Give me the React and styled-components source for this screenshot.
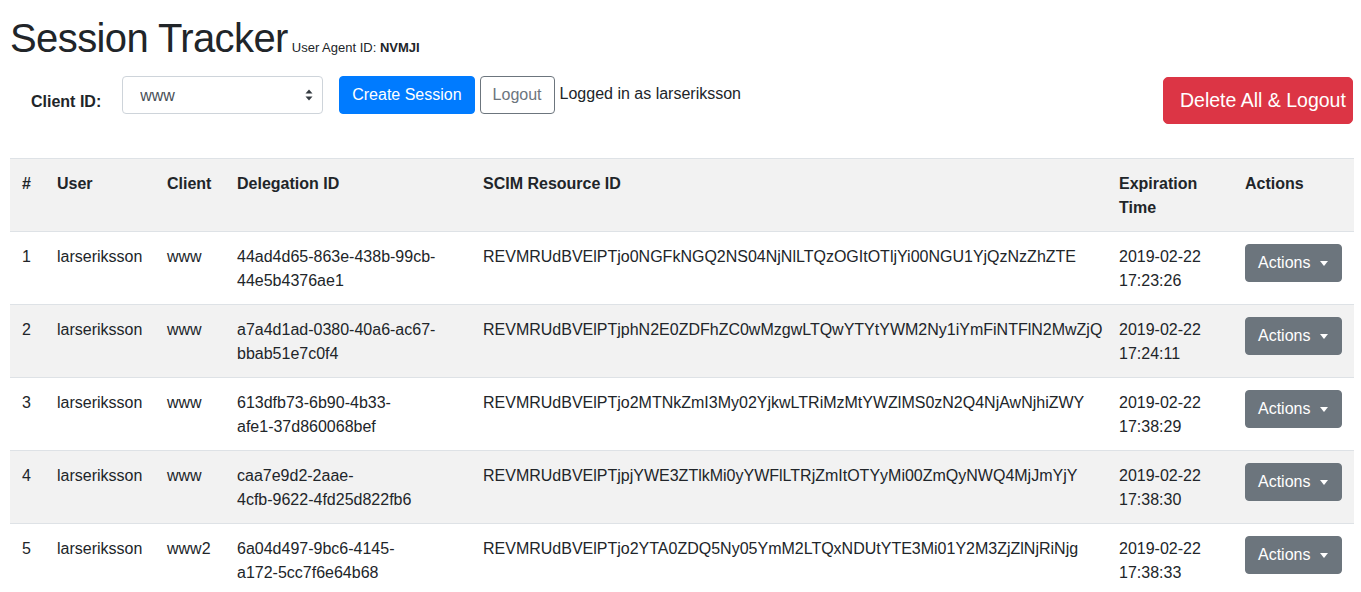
import React from 'react'
import styled, { createGlobalStyle } from 'styled-components'

const GlobalStyle = createGlobalStyle`
  body {
    margin: 0;
    background: #fff;
    color: #212529;
    font-family: "Liberation Sans", Arial, sans-serif;
    font-size: 16px;
    line-height: 1.5;
  }
`

const Page = styled.div`
  padding: 14px 7px 0 10px;
`

const TitleRow = styled.div`
  display: flex;
  align-items: baseline;
  gap: 4px;
`

const Title = styled.h1`
  margin: 0;
  font-size: 40px;
  font-weight: 500;
  line-height: 48px;
  letter-spacing: -0.6px;
`

const AgentId = styled.small`
  font-size: 13px;
  b {
    font-weight: 700;
  }
`

const Controls = styled.div`
  display: flex;
  align-items: flex-start;
  margin-top: 14px;
  height: 48px;
`

const FormGroup = styled.div`
  display: flex;
  align-items: center;
  height: 38px;
`

const Label = styled.label`
  font-weight: 700;
  padding: 13px 21px 0 21px;
`

const SelectWrap = styled.div`
  position: relative;
  width: 201px;
  height: 38px;
  margin-right: 16px;
`

const Select = styled.select`
  appearance: none;
  width: 100%;
  height: 100%;
  padding: 0 28px 0 17px;
  border: 1px solid #ced4da;
  border-radius: 4px;
  background: #fff;
  color: #495057;
  font-family: inherit;
  font-size: 16px;
`

const SelectArrows = styled.svg`
  position: absolute;
  right: 10px;
  top: 13px;
  pointer-events: none;
`

const Button = styled.button`
  height: ${p => (p.$large ? '47px' : '38px')};
  padding: ${p => (p.$large ? '0 16px' : '0 12px')};
  font-family: inherit;
  font-size: ${p => (p.$large ? '19.5px' : '16px')};
  line-height: 1.5;
  border-radius: ${p => (p.$large ? '5px' : '4px')};
  border: 1px solid ${p => p.$color};
  background: ${p => (p.$outline ? '#fff' : p.$color)};
  color: ${p => (p.$outline ? p.$color : '#fff')};
  white-space: nowrap;
  display: inline-flex;
  align-items: center;
  cursor: pointer;
`

const LoggedIn = styled.span`
  margin-left: 5px;
  margin-top: -2px;
`

const Spacer = styled.div`
  flex: 1;
`

const DeleteButton = styled(Button)`
  width: 190px;
  margin-top: 1px;
  margin-right: 1px;
  overflow: hidden;
`

const Table = styled.table`
  margin-top: 34px;
  width: 1344px;
  border-collapse: collapse;
  table-layout: fixed;
`

const Row = styled.tr`
  background: ${p => (p.$striped ? '#f2f2f2' : '#fff')};
`

const Th = styled.th`
  box-sizing: border-box;
  text-align: left;
  vertical-align: top;
  font-weight: 700;
  padding: 13px 12px 11px;
  border-top: 1px solid #dee2e6;
  width: ${p => p.$w}px;
`

const Td = styled.td`
  vertical-align: top;
  padding: 13px 12px 11px;
  border-top: 1px solid #dee2e6;
`

const ActionCell = styled(Td)`
  padding-top: 12px;
  padding-bottom: 12px;
`

const IdLine = styled.span`
  display: block;
  white-space: nowrap;
`

const Caret = styled.span`
  display: inline-block;
  margin-left: 10px;
  margin-right: 1px;
  border-top: 5px solid #fff;
  border-left: 4px solid transparent;
  border-right: 4px solid transparent;
`

const columns = [
  ['#', 35],
  ['User', 110],
  ['Client', 70],
  ['Delegation ID', 246],
  ['SCIM Resource ID', 636],
  ['Expiration Time', 126],
  ['Actions', 121],
]

// ids are split where the original layout wraps them
const sessions = [
  { user: 'larseriksson', client: 'www', id: ['44ad4d65-863e-438b-99cb-', '44e5b4376ae1'], date: '2019-02-22', time: '17:23:26' },
  { user: 'larseriksson', client: 'www', id: ['a7a4d1ad-0380-40a6-ac67-', 'bbab51e7c0f4'], date: '2019-02-22', time: '17:24:11' },
  { user: 'larseriksson', client: 'www', id: ['613dfb73-6b90-4b33-', 'afe1-37d860068bef'], date: '2019-02-22', time: '17:38:29' },
  { user: 'larseriksson', client: 'www', id: ['caa7e9d2-2aae-', '4cfb-9622-4fd25d822fb6'], date: '2019-02-22', time: '17:38:30' },
  { user: 'larseriksson', client: 'www2', id: ['6a04d497-9bc6-4145-', 'a172-5cc7f6e64b68'], date: '2019-02-22', time: '17:38:33' },
]

const scimId = id => btoa('DELEGATION:' + id).replace(/=+$/, '')

const App = () => {
  return (
    <Page>
      <GlobalStyle />
      <TitleRow>
        <Title>Session Tracker</Title>
        <AgentId>User Agent ID: <b>NVMJI</b></AgentId>
      </TitleRow>

      <Controls>
        <FormGroup>
          <Label>Client ID:</Label>
          <SelectWrap>
            <Select defaultValue='www'>
              <option value='www'>www</option>
              <option value='www2'>www2</option>
            </Select>
            <SelectArrows width='8' height='12' viewBox='0 0 8 12'>
              <path d='M4 0.5 L7.5 4.5 H0.5 Z M4 11.5 L0.5 7.5 H7.5 Z' fill='#343a40' />
            </SelectArrows>
          </SelectWrap>
          <Button $color='#007bff'>Create Session</Button>
          <Button $color='#6c757d' $outline style={{ marginLeft: 5 }}>Logout</Button>
          <LoggedIn>Logged in as larseriksson</LoggedIn>
        </FormGroup>
        <Spacer />
        <DeleteButton $color='#dc3545' $large>Delete All &amp; Logout</DeleteButton>
      </Controls>

      <Table>
        <tbody>
          <Row $striped>
            {columns.map(([name, w]) => (
              <Th key={name} $w={w}>{name}</Th>
            ))}
          </Row>
          {sessions.map((s, i) => (
            <Row key={s.id[0]} $striped={i % 2 === 1}>
              <Td>{i + 1}</Td>
              <Td>{s.user}</Td>
              <Td>{s.client}</Td>
              <Td>
                {s.id.map(part => <IdLine key={part}>{part}</IdLine>)}
              </Td>
              <Td>{scimId(s.id.join(''))}</Td>
              <Td>{s.date} {s.time}</Td>
              <ActionCell>
                <Button $color='#6c757d'>Actions<Caret /></Button>
              </ActionCell>
            </Row>
          ))}
        </tbody>
      </Table>
    </Page>
  )
}

export default App
